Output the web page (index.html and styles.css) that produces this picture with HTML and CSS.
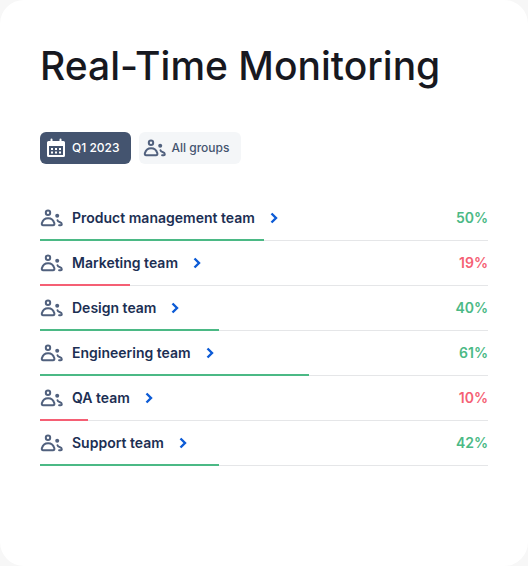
FILE: index.html
```html
<!DOCTYPE html>
<html lang="en">
<head>
<meta charset="utf-8">
<meta name="viewport" content="width=device-width, initial-scale=1">
<title>Real-Time Monitoring</title>
<link rel="stylesheet" href="styles.css">
</head>
<body>
<svg class="sprite" aria-hidden="true">
  <symbol id="people" viewBox="0 0 24 18">
    <g fill="none" stroke="currentColor" stroke-width="2" stroke-linecap="round" stroke-linejoin="round">
      <circle cx="8" cy="3.700" r="2.200"/>
      <path d="M3.200 16.200h9.800c1.200 0 1.700-.9 1.300-2C13.500 11.100 11 9.200 8.100 9.200s-5.400 1.900-6.200 5c-.4 1.100.1 2 1.300 2z"/>
      <path d="M17.500 11.200c.3 1.200 1 1.500 2.100 1.800 1.400.4 2.200 1.100 2.200 2.200 0 .7-.4 1-1 1h-1.700"/>
    </g>
    <circle cx="17.200" cy="6.700" r="2" fill="currentColor"/>
  </symbol>
  <symbol id="chevron" viewBox="0 0 8 12">
    <path d="M1.500 1.500 6 6l-4.500 4.500" fill="none" stroke="currentColor" stroke-width="2.400"/>
  </symbol>
</svg>
<main class="card">
  <h1 class="title">Real-Time Monitoring</h1>
  <div class="filters">
    <button class="filter filter-active" type="button">
      <svg class="calendar" viewBox="0 0 18 20" aria-hidden="true">
        <path d="M4.500 1.500v4M13.500 1.500v4" stroke="currentColor" stroke-width="2" stroke-linecap="round"/>
        <path fill="currentColor" fill-rule="evenodd" d="M1.500 3h15A1.500 1.500 0 0 1 18 4.500v13a1.500 1.500 0 0 1-1.500 1.500h-15A1.500 1.500 0 0 1 0 17.500v-13A1.500 1.500 0 0 1 1.500 3zM2 8v9h14V8z"/>
        <path d="M4 11h10M4 14.500h10" stroke="currentColor" stroke-width="2" stroke-dasharray="2 2"/>
      </svg>
      Q1 2023
    </button>
    <button class="filter" type="button">
      <svg class="people" aria-hidden="true"><use href="#people"/></svg>
      All groups
    </button>
  </div>
  <ul class="teams">
    <li class="team good">
      <a class="name" href="#product"><svg class="people" aria-hidden="true"><use href="#people"/></svg>Product management team<svg class="chevron" aria-hidden="true"><use href="#chevron"/></svg></a>
      <span class="value">50%</span><span class="bar" style="width:50%"></span>
    </li>
    <li class="team bad">
      <a class="name" href="#marketing"><svg class="people" aria-hidden="true"><use href="#people"/></svg>Marketing team<svg class="chevron" aria-hidden="true"><use href="#chevron"/></svg></a>
      <span class="value">19%</span><span class="bar" style="width:20%"></span>
    </li>
    <li class="team good">
      <a class="name" href="#design"><svg class="people" aria-hidden="true"><use href="#people"/></svg>Design team<svg class="chevron" aria-hidden="true"><use href="#chevron"/></svg></a>
      <span class="value">40%</span><span class="bar" style="width:40%"></span>
    </li>
    <li class="team good">
      <a class="name" href="#engineering"><svg class="people" aria-hidden="true"><use href="#people"/></svg>Engineering team<svg class="chevron" aria-hidden="true"><use href="#chevron"/></svg></a>
      <span class="value">61%</span><span class="bar" style="width:60%"></span>
    </li>
    <li class="team bad">
      <a class="name" href="#qa"><svg class="people" aria-hidden="true"><use href="#people"/></svg>QA team<svg class="chevron" aria-hidden="true"><use href="#chevron"/></svg></a>
      <span class="value">10%</span><span class="bar" style="width:10.700%"></span>
    </li>
    <li class="team good">
      <a class="name" href="#support"><svg class="people" aria-hidden="true"><use href="#people"/></svg>Support team<svg class="chevron" aria-hidden="true"><use href="#chevron"/></svg></a>
      <span class="value">42%</span><span class="bar" style="width:40%"></span>
    </li>
  </ul>
</main>
</body>
</html>
```
FILE: styles.css
```css
* { box-sizing: border-box; }

body {
  margin: 0;
  background: #f7f7f7;
  font-family: Inter, "Liberation Sans", sans-serif;
}

.sprite { display: none; }

.card {
  min-height: 100vh;
  padding: 40px;
  border-radius: 24px;
  background: #fff;
}

.title {
  margin: 0;
  font-size: 39px;
  line-height: 52px;
  font-weight: 500;
  color: #17181f;
}

.filters {
  display: flex;
  gap: 8px;
  margin-top: 40px;
}

.filter {
  display: flex;
  align-items: center;
  gap: 4px;
  height: 32px;
  padding: 0 12px 0 4px;
  border: 0;
  border-radius: 6px;
  background: #f4f6f8;
  color: #44546f;
  font: 500 12px/20px Inter, "Liberation Sans", sans-serif;
}

.filter-active {
  gap: 7px;
  padding-left: 7px;
  background: #44546f;
  color: #fff;
}

.calendar { width: 18px; height: 20px; }

.people {
  width: 24px;
  height: 18px;
  color: #51617e;
}

.teams {
  margin: 32px 0 0;
  padding: 0;
  list-style: none;
}

.team {
  position: relative;
  display: flex;
  align-items: center;
  justify-content: space-between;
  height: 45px;
  border-bottom: 1px solid #e5e6e8;
  font-size: 14px;
  line-height: 20px;
  font-weight: 600;
}

.name {
  display: flex;
  align-items: center;
  color: #1c2f53;
  text-decoration: none;
}

.name .people { margin-right: 8px; }

.chevron {
  width: 8px;
  height: 12px;
  margin-left: 15px;
  color: #0c5bd6;
}

.bar {
  position: absolute;
  left: 0;
  bottom: -1px;
  height: 2px;
  background: currentColor;
}

.good { color: #4bb985; }
.bad { color: #f55f74; }
```
